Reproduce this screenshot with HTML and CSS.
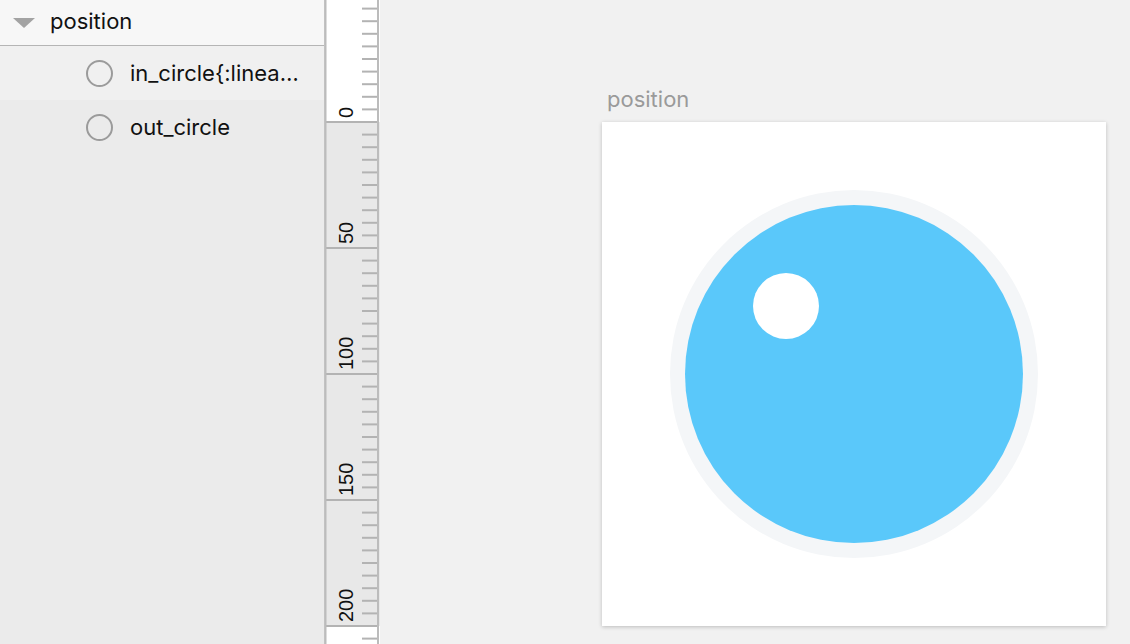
FILE: index.html
```html
<!DOCTYPE html>
<html lang="en">
<head>
    <meta charset="UTF-8">
    <meta name="viewport" content="width=device-width, initial-scale=1.0">
    <title>position</title>
    <link rel="stylesheet" href="styles.css">
</head>
<body>
    <div class="app">
        <div class="sidebar">
            <div class="group-row">
                <span class="disclosure"></span>
                <span class="group-name">position</span>
            </div>
            <div class="layer-row selected">
                <span class="layer-icon"></span>
                <span class="layer-name">in_circle{:linea…</span>
            </div>
            <div class="layer-row">
                <span class="layer-icon"></span>
                <span class="layer-name">out_circle</span>
            </div>
        </div>

        <div class="ruler">
            <svg width="55" height="644" viewBox="0 0 55 644">
                <rect x="0" y="0" width="55" height="122" fill="#ffffff"/>
                <rect x="0" y="122" width="55" height="504" fill="#e8e8e8"/>
                <rect x="0" y="626" width="55" height="18" fill="#ffffff"/>
                <g id="ticks" stroke="#b3b3b3" stroke-width="2"></g>
                <g id="labels" class="ruler-labels"></g>
                <rect x="0" y="0" width="1.5" height="644" fill="#bcbcbc"/>
                <rect x="52" y="0" width="2" height="644" fill="#bcbcbc"/>
            </svg>
        </div>

        <div class="canvas">
            <div class="artboard-title">position</div>
            <div class="artboard">
                <svg width="504" height="504" viewBox="0 0 504 504">
                    <circle cx="252" cy="252" r="184" fill="#f4f6f8"/>
                    <circle cx="252" cy="252" r="169" fill="#5ac8fa"/>
                    <circle cx="184" cy="184" r="33" fill="#ffffff"/>
                </svg>
            </div>
        </div>
    </div>

    <script>
        // ruler: 0 sits at y=122, 2.52px per unit, a tick every 5 units
        const ns = 'http://www.w3.org/2000/svg';
        const ticks = document.getElementById('ticks');
        const labels = document.getElementById('labels');
        const zero = 122;
        const step = 12.6;

        for (let k = -10; k <= 41; k++) {
            const y = zero + k * step;
            const line = document.createElementNS(ns, 'line');
            line.setAttribute('x1', k % 10 === 0 ? 0 : 37);
            line.setAttribute('x2', 53);
            line.setAttribute('y1', y);
            line.setAttribute('y2', y);
            ticks.appendChild(line);

            if (k % 10 === 0 && k >= 0) {
                const t = document.createElementNS(ns, 'text');
                t.setAttribute('x', 28);
                t.setAttribute('y', y - 4);
                t.setAttribute('transform', `rotate(-90 28 ${y - 4})`);
                t.textContent = k * 5;
                labels.appendChild(t);
            }
        }
    </script>
</body>
</html>
```

FILE: styles.css
```css
body {
    margin: 0;
    padding: 0;
    font-family: 'Inter', 'Liberation Sans', sans-serif;
    color: #111;
    background-color: #f1f1f1;
    overflow: hidden;
}

.app {
    display: flex;
    height: 100vh;
}

.sidebar {
    width: 324px;
    flex-shrink: 0;
    background-color: #ebebeb;
    border-right: 1px solid #c2c2c2;
}

.group-row {
    height: 45px;
    display: flex;
    align-items: center;
    background-color: #f7f7f7;
    border-bottom: 1px solid #b5b5b5;
}

.disclosure {
    width: 0;
    height: 0;
    margin-left: 13px;
    margin-top: 1px;
    border-left: 11px solid transparent;
    border-right: 11px solid transparent;
    border-top: 10px solid #a3a3a3;
}

.group-name {
    margin-left: 15px;
    font-size: 22px;
    margin-top: -4px;
}

.layer-row {
    height: 54px;
    display: flex;
    align-items: center;
}

.layer-row.selected {
    background-color: #f0f0f0;
}

.layer-icon {
    width: 23px;
    height: 23px;
    margin-left: 86px;
    border: 2px solid #9b9b9b;
    border-radius: 50%;
    flex-shrink: 0;
}

.layer-name {
    margin-left: 17px;
    font-size: 22px;
    white-space: nowrap;
}

.ruler {
    width: 55px;
    flex-shrink: 0;
}

.ruler svg {
    display: block;
}

.ruler-labels {
    font-family: 'Liberation Sans', sans-serif;
    font-size: 20px;
    fill: #111;
}

.canvas {
    flex: 1;
    position: relative;
    background-color: #f1f1f1;
}

.artboard-title {
    position: absolute;
    left: 227px;
    top: 86px;
    font-size: 22px;
    color: #9a9a9a;
}

.artboard {
    position: absolute;
    left: 222px;
    top: 122px;
    width: 504px;
    height: 504px;
    background-color: #ffffff;
    box-shadow: 0 1px 4px rgba(0, 0, 0, 0.22);
}

.artboard svg {
    display: block;
}
```
